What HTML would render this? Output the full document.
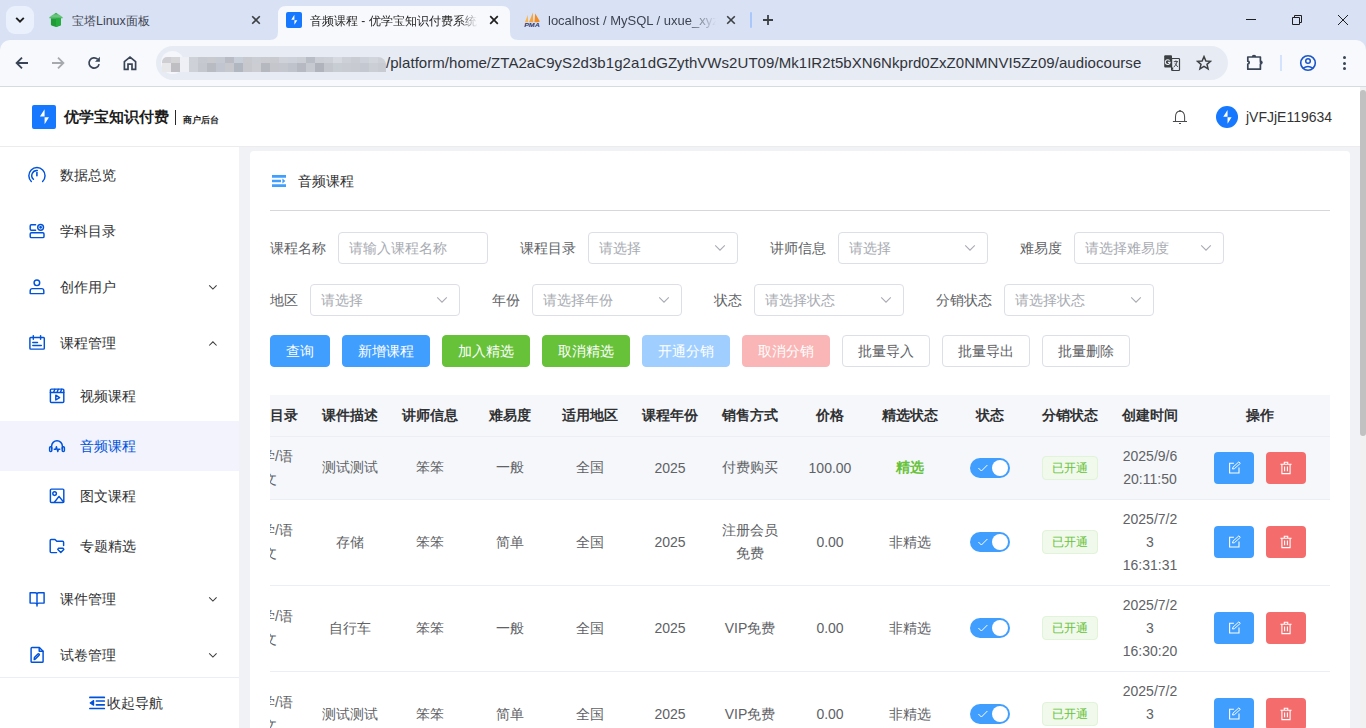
<!DOCTYPE html>
<html><head><meta charset="utf-8">
<style>
*{box-sizing:border-box;margin:0;padding:0}
html,body{width:1366px;height:728px;overflow:hidden;background:#fff;font-family:"Liberation Sans",sans-serif;}
.abs{position:absolute}
svg{display:block}
#blur i{position:absolute;width:9px;height:6px}
/* chrome */
#tabstrip{position:absolute;left:0;top:0;width:1366px;height:56px;background:#d9e2f5}
#toolbar{position:absolute;left:0;top:40px;width:1366px;height:46px;background:#f8f9fd;border-radius:10px 10px 0 0}
#tbborder{position:absolute;left:0;top:86px;width:1366px;height:1px;background:#d5dae3}
.tabtitle{position:absolute;top:14px;font-size:12px;line-height:14px;color:#1f1f1f;white-space:nowrap;overflow:hidden}
#omni{position:absolute;left:156px;top:46px;width:1072px;height:34px;border-radius:17px;background:#e7ebf3}
/* page */
#header{position:absolute;left:0;top:87px;width:1360px;height:60px;background:#fff;border-bottom:1px solid #ececec}
#sidebar{position:absolute;left:0;top:147px;width:239px;height:581px;background:#fff;overflow:hidden}
#main{position:absolute;left:239px;top:147px;width:1121px;height:581px;background:#f0f2f5;overflow:hidden}
#sbtrack{position:absolute;left:1360px;top:87px;width:6px;height:641px;background:#f1f1f1}
#sbthumb{position:absolute;left:1360px;top:90px;width:6px;height:346px;background:#c1c1c1;border-radius:3px}
.mi{position:absolute;left:0;width:239px;height:56px;font-size:14px;color:#303133}
.mi .t{position:absolute;left:60px;top:19px;line-height:18px}
.mi .ic{position:absolute;left:28px;top:19px}
.mi .arr{position:absolute;left:207px;top:25px}
.si{position:absolute;left:0;width:239px;height:50px;font-size:14px;color:#303133}
.si .t{position:absolute;left:80px;top:16px;line-height:18px}
.si .ic{position:absolute;left:49px;top:17px}
.si.act{background:#f2f3fd;color:#1660e8}
.btn{height:32px;border:1px solid;border-radius:4px;font-size:14px;line-height:30px;text-align:center;white-space:nowrap}
.th{font-size:14px;line-height:18px;font-weight:bold;color:#303133;text-align:center;white-space:nowrap}
.td{font-size:14px;line-height:23px;color:#606266;text-align:center;white-space:nowrap}
.tag{width:56px;height:24px;border:1px solid #e1f3d8;background:#f0f9eb;color:#67c23a;border-radius:4px;font-size:12px;line-height:22px;text-align:center}
#card{position:absolute;left:11px;top:4px;width:1100px;height:700px;background:#fff;border-radius:4px}
</style></head><body>


<!-- ===== Browser tab strip ===== -->
<div id="tabstrip"></div>
<!-- dropdown -->
<div class="abs" style="left:6px;top:6px;width:28px;height:28px;border-radius:9px;background:#eaf0fc"></div>
<svg class="abs" style="left:14px;top:14px" width="12" height="12" viewBox="0 0 12 12"><path d="M2.2 3.8 L6 7.6 L9.8 3.8" fill="none" stroke="#1f1f1f" stroke-width="1.9"/></svg>
<!-- tab1 -->
<svg class="abs" style="left:49px;top:12px" width="14" height="16" viewBox="0 0 14 16">
<path d="M7 0.8 L12.6 4.4 L13.6 5.6 L13.6 6.3 L0.4 6.3 L0.4 5.6 L1.4 4.4 Z" fill="#34ad4e"/>
<path d="M3.2 3.1 H10.8 M1 4.9 H13" stroke="#b5e2be" stroke-width="0.7"/>
<path d="M1.9 6.3 H12 V12.6 Q12 14 7 14.9 Q1.9 14 1.9 12.6 Z" fill="#1f9c36"/>
<path d="M7 6.3 H12 V12.6 Q12 14 7 14.9 Z" fill="#25ae3e"/>
</svg>
<div class="tabtitle" style="left:72px;width:90px;color:#3d4350">宝塔<span style="font-size:12.4px">Linux</span>面板</div>
<svg class="abs" style="left:251px;top:15px" width="10" height="10" viewBox="0 0 10 10"><path d="M1.2 1.2 L8.8 8.8 M8.8 1.2 L1.2 8.8" stroke="#3c4043" stroke-width="1.6"/></svg>
<!-- active tab -->
<svg class="abs" style="left:270px;top:6px" width="248" height="34" viewBox="0 0 248 34">
<path d="M0 34 Q8 34 8 26 L8 8 Q8 0 16 0 L232 0 Q240 0 240 8 L240 26 Q240 34 248 34 Z" fill="#f8f9fd"/>
</svg>
<div class="abs" style="left:286px;top:12px;width:16px;height:16px;border-radius:2px;background:#1677ff"></div>
<svg class="abs" style="left:286px;top:12px" width="16" height="16" viewBox="0 0 16 16"><path d="M8.40 2.87 L5.27 7.73 L8.40 7.73 Z M8.40 8.13 L11.33 8.13 L8.40 12.87 Z" fill="#fff"/></svg>
<div class="tabtitle" style="left:310px;width:168px;color:#1f1f1f;-webkit-mask-image:linear-gradient(90deg,#000 150px,transparent 168px)">音频课程 - 优学宝知识付费系统</div>
<svg class="abs" style="left:489px;top:15px" width="10" height="10" viewBox="0 0 10 10"><path d="M1.2 1.2 L8.8 8.8 M8.8 1.2 L1.2 8.8" stroke="#1f1f1f" stroke-width="1.7"/></svg>
<!-- tab3 -->
<svg class="abs" style="left:523px;top:12px" width="18" height="16" viewBox="0 0 18 16">
<path d="M1.9 10.3 L4.8 2.9 L5.2 10.3 Z" fill="#f9b552"/>
<path d="M6 10.3 L9.9 0.6 L10.3 10.3 Z" fill="#f7a43a"/>
<path d="M11.4 10.3 L12.2 1.6 L16.9 9.5 L15 10.3 Z" fill="#f28a1e"/>
<text x="1.2" y="14.8" font-family="Liberation Sans" font-weight="bold" font-style="italic" font-size="5.2" textLength="15.6" lengthAdjust="spacingAndGlyphs" fill="#2c3770">PMA</text>
</svg>
<div class="tabtitle" style="left:548px;width:170px;font-size:13px;color:#3d4350;-webkit-mask-image:linear-gradient(90deg,#000 140px,transparent 168px)">localhost / MySQL / uxue_xyz</div>
<svg class="abs" style="left:726px;top:15px" width="10" height="10" viewBox="0 0 10 10"><path d="M1.2 1.2 L8.8 8.8 M8.8 1.2 L1.2 8.8" stroke="#3c4043" stroke-width="1.6"/></svg>
<div class="abs" style="left:750px;top:12px;width:2px;height:16px;background:#a8c7fa;border-radius:1px"></div>
<svg class="abs" style="left:762px;top:14px" width="12" height="12" viewBox="0 0 12 12"><path d="M6 1 L6 11 M1 6 L11 6" stroke="#3c4043" stroke-width="1.8"/></svg>
<!-- window controls -->
<div class="abs" style="left:1246px;top:19px;width:10px;height:1px;background:#1f1f1f"></div>
<svg class="abs" style="left:1290px;top:13px" width="14" height="14" viewBox="0 0 14 14"><path d="M2.5 4.5 h7 v7 h-7 Z M4.5 4.5 V2.5 h7 v7 h-2" fill="none" stroke="#1f1f1f" stroke-width="1"/></svg>
<svg class="abs" style="left:1337px;top:14px" width="12" height="12" viewBox="0 0 12 12"><path d="M1 1 L11 11 M11 1 L1 11" stroke="#1f1f1f" stroke-width="1"/></svg>

<!-- ===== toolbar ===== -->
<div id="toolbar"></div>
<div id="tbborder"></div>
<svg class="abs" style="left:14px;top:55px" width="16" height="16" viewBox="0 0 16 16"><path d="M14 8 H3 M8 2.6 L2.6 8 L8 13.4" fill="none" stroke="#394456" stroke-width="1.8"/></svg>
<svg class="abs" style="left:50px;top:55px" width="16" height="16" viewBox="0 0 16 16"><path d="M2 8 H13 M8 2.6 L13.4 8 L8 13.4" fill="none" stroke="#a6a9ae" stroke-width="1.8"/></svg>
<svg class="abs" style="left:86px;top:55px" width="16" height="16" viewBox="0 0 16 16"><path d="M11.6 4.2 A5.1 5.1 0 1 0 13.1 9.1" fill="none" stroke="#394456" stroke-width="1.7"/><path d="M13.9 1.8 V6.7 H9 Z" fill="#394456"/></svg>
<svg class="abs" style="left:122px;top:55px" width="16" height="16" viewBox="0 0 16 16"><path d="M2.4 14.4 V6.6 L8 2 L13.6 6.6 V14.4 H10 V9.2 H6 V14.4 Z" fill="none" stroke="#394456" stroke-width="1.7" stroke-linejoin="miter"/></svg>
<div id="omni"></div>
<div class="abs" style="left:161px;top:51px;width:23px;height:23px;border-radius:12px;background:#f4f6fb"></div>
<div id="blur" class="abs" style="left:162px;top:57px;width:224px;height:15px;overflow:hidden;border-radius:5px 8px 0 0"><i style="left:0px;top:0;background:#cfcfd3"></i><i style="left:0px;top:6px;height:9px;background:#e8e8ea"></i><i style="left:9px;top:0;background:#d5d5d8"></i><i style="left:9px;top:6px;height:9px;background:#bfbfc3"></i><i style="left:18px;top:0;background:#eef0f6"></i><i style="left:18px;top:6px;height:9px;background:#eef0f6"></i><i style="left:27px;top:0;background:#ced1d8"></i><i style="left:27px;top:6px;height:9px;background:#ced1d8"></i><i style="left:36px;top:0;background:#c7c9d0"></i><i style="left:36px;top:6px;height:9px;background:#c5c7ce"></i><i style="left:45px;top:0;background:#c9cad0"></i><i style="left:45px;top:6px;height:9px;background:#b9bbc2"></i><i style="left:54px;top:0;background:#c5c9d2"></i><i style="left:54px;top:6px;height:9px;background:#c0c5cf"></i><i style="left:63px;top:0;background:#b9bcc4"></i><i style="left:63px;top:6px;height:9px;background:#c7c8ce"></i><i style="left:72px;top:0;background:#c8ced8"></i><i style="left:72px;top:6px;height:9px;background:#b1b7c1"></i><i style="left:81px;top:0;background:#c7c9cf"></i><i style="left:81px;top:6px;height:9px;background:#c7c8ce"></i><i style="left:90px;top:0;background:#cbcdd4"></i><i style="left:90px;top:6px;height:9px;background:#cbcdd3"></i><i style="left:99px;top:0;background:#c9cbd1"></i><i style="left:99px;top:6px;height:9px;background:#b5b8bf"></i><i style="left:108px;top:0;background:#c8cad0"></i><i style="left:108px;top:6px;height:9px;background:#c4c6cc"></i><i style="left:117px;top:0;background:#cfd2d9"></i><i style="left:117px;top:6px;height:9px;background:#c4c7ce"></i><i style="left:126px;top:0;background:#cdd2da"></i><i style="left:126px;top:6px;height:9px;background:#bfc4cc"></i><i style="left:135px;top:0;background:#cbced5"></i><i style="left:135px;top:6px;height:9px;background:#b6b9c1"></i><i style="left:144px;top:0;background:#b9bdc5"></i><i style="left:144px;top:6px;height:9px;background:#c6c9d0"></i><i style="left:153px;top:0;background:#cbced5"></i><i style="left:153px;top:6px;height:9px;background:#b0b3bb"></i><i style="left:162px;top:0;background:#cdd0d7"></i><i style="left:162px;top:6px;height:9px;background:#c3c6cc"></i><i style="left:171px;top:0;background:#d6d9e0"></i><i style="left:171px;top:6px;height:9px;background:#c8ccd3"></i><i style="left:180px;top:0;background:#cdd0d7"></i><i style="left:180px;top:6px;height:9px;background:#c8cbd2"></i><i style="left:189px;top:0;background:#c9ccd3"></i><i style="left:189px;top:6px;height:9px;background:#c7cad1"></i><i style="left:198px;top:0;background:#cdd1d9"></i><i style="left:198px;top:6px;height:9px;background:#c4c8d0"></i><i style="left:207px;top:0;background:#d2d5dc"></i><i style="left:207px;top:6px;height:9px;background:#cbced5"></i><i style="left:216px;top:0;background:#cdd0d6"></i><i style="left:216px;top:6px;height:9px;background:#c8cbd1"></i></div>
<div class="abs" style="left:386px;top:54px;font-size:15px;line-height:18px;color:#30333a;white-space:nowrap;letter-spacing:0.057px">/platform/home/ZTA2aC9yS2d3b1g2a1dGZythVWs2UT09/Mk1IR2t5bXN6Nkprd0ZxZ0NMNVI5Zz09/audiocourse</div>
<svg class="abs" style="left:1164px;top:55px" width="17" height="17" viewBox="0 0 17 17">
<rect x="0.2" y="0.2" width="7.8" height="12.4" rx="1" fill="#3c4043"/>
<rect x="7.6" y="3.5" width="7.9" height="12" rx="0.8" fill="#e7ebf3" stroke="#3c4043" stroke-width="1.2"/>
<path d="M7.2 12.4 H9.2 V16.2 Z" fill="#3c4043"/>
<path d="M5.6 5.6 A2.4 2.4 0 1 0 6.1 7.4 H3.9" fill="none" stroke="#e7ebf3" stroke-width="1.1"/>
<path d="M9.8 6.6 H14 M11.9 5.4 V6.6 M13.1 6.6 Q12.2 10 9.8 12.2 M11 8.4 L13.8 12" fill="none" stroke="#3c4043" stroke-width="0.9"/>
</svg>
<svg class="abs" style="left:1196px;top:55px" width="16" height="16" viewBox="0 0 16 16"><path d="M8 1.6 L9.9 6 L14.6 6.3 L11 9.3 L12.1 13.9 L8 11.4 L3.9 13.9 L5 9.3 L1.4 6.3 L6.1 6 Z" fill="none" stroke="#3c4043" stroke-width="1.5" stroke-linejoin="miter"/></svg>
<svg class="abs" style="left:1246px;top:53px" width="18" height="18" viewBox="0 0 18 18"><path d="M1.8 4 H6.6 A1.4 1.4 0 0 1 9.4 4 H14.4 V8.2 A1.4 1.4 0 0 1 14.4 11 V16.2 H1.8 V11 A1.4 1.4 0 0 0 1.8 8.2 Z" fill="none" stroke="#394456" stroke-width="1.7" stroke-linejoin="round"/><circle cx="8" cy="3.4" r="1.3" fill="#394456"/><circle cx="15" cy="9.6" r="1.3" fill="#394456"/></svg>
<div class="abs" style="left:1280px;top:55px;width:2px;height:16px;background:#d3e3fd"></div>
<svg class="abs" style="left:1299px;top:54px" width="18" height="18" viewBox="0 0 18 18"><circle cx="9" cy="9" r="7.3" fill="none" stroke="#1a56c9" stroke-width="1.6"/><circle cx="9" cy="7" r="2.3" fill="none" stroke="#1a56c9" stroke-width="1.5"/><path d="M4.2 14.2 Q9 10.6 13.8 14.2" fill="none" stroke="#1a56c9" stroke-width="1.5"/></svg>
<div class="abs" style="left:1342.5px;top:56px;width:3px;height:3px;border-radius:2px;background:#394456"></div>
<div class="abs" style="left:1342.5px;top:61.5px;width:3px;height:3px;border-radius:2px;background:#394456"></div>
<div class="abs" style="left:1342.5px;top:67px;width:3px;height:3px;border-radius:2px;background:#394456"></div>

<!-- ===== Page ===== -->
<div id="header">
<div class="abs" style="left:32px;top:18px;width:24px;height:24px;border-radius:2px;background:#1677ff"></div>
<svg class="abs" style="left:32px;top:18px" width="24" height="24" viewBox="0 0 24 24"><path d="M12.60 4.30 L7.90 11.60 L12.60 11.60 Z M12.60 12.20 L17.00 12.20 L12.60 19.30 Z" fill="#fff"/></svg>
<div class="abs" style="left:64px;top:21px;font-size:15px;line-height:18px;font-weight:bold;color:#1d1d1d;white-space:nowrap">优学宝知识付费</div>
<div class="abs" style="left:174.7px;top:22.5px;width:1.7px;height:15px;background:#2a2a2a"></div>
<div class="abs" style="left:183px;top:28px;font-size:9px;line-height:11px;font-weight:bold;color:#1d1d1d;white-space:nowrap">商户后台</div>
<svg class="abs" style="left:1172px;top:22px" width="16" height="16" viewBox="0 0 16 16"><path d="M3.5 12.4 V7.8 Q3.6 2.4 8 2 Q12.4 2.4 12.6 7.8 V12.4 M0.9 12.4 H15 M7 14.5 H9" fill="none" stroke="#4a4b4f" stroke-width="1.05"/><circle cx="8" cy="1.9" r="0.9" fill="#4a4b4f"/></svg>
<div class="abs" style="left:1216px;top:19px;width:22px;height:22px;border-radius:11px;background:#1677ff"></div>
<svg class="abs" style="left:1216px;top:19px" width="22" height="22" viewBox="0 0 22 22"><path d="M11.55 3.94 L7.24 10.63 L11.55 10.63 Z M11.55 11.18 L15.58 11.18 L11.55 17.69 Z" fill="#fff"/></svg>
<div class="abs" style="left:1246px;top:22px;font-size:14px;line-height:16px;color:#333;white-space:nowrap">jVFJjE119634</div>
</div>
<div id="sidebar">
<svg class="abs" style="left:24px;top:15px" width="26" height="26" viewBox="0 0 26 26" fill="none" stroke="#0052d9" stroke-width="1.45" stroke-linecap="round" stroke-linejoin="round"><path d="M7.3 19.5 A8.1 8.1 0 1 1 18.6 19.5"/><path d="M9.4 17.3 A5.1 5.1 0 0 1 13.3 8.5"/><path d="M12.9 10.6 V13.8" stroke-width="1.6"/></svg><div class="abs" style="left:60px;top:19px;font-size:14px;line-height:18px;color:#303133;white-space:nowrap">数据总览</div><svg class="abs" style="left:24px;top:71px" width="26" height="26" viewBox="0 0 26 26" fill="none" stroke="#0052d9" stroke-width="1.45" stroke-linecap="round" stroke-linejoin="round"><path d="M11.6 6.7 H7.4 Q6.2 6.7 6.2 7.9 V11 Q6.2 12.2 7.4 12.2 H11.6"/><circle cx="16.6" cy="9.3" r="2.9"/><circle cx="16.6" cy="9.3" r="0.7" fill="#0052d9"/><rect x="6.2" y="14.8" width="13.8" height="4.8" rx="1.2"/></svg><div class="abs" style="left:60px;top:75px;font-size:14px;line-height:18px;color:#303133;white-space:nowrap">学科目录</div><svg class="abs" style="left:24px;top:127px" width="26" height="26" viewBox="0 0 26 26" fill="none" stroke="#0052d9" stroke-width="1.45" stroke-linecap="round" stroke-linejoin="round"><circle cx="12.9" cy="8.8" r="2.8"/><path d="M6.2 19.6 V16.8 Q6.2 14.6 8.4 14.6 H17.6 Q19.8 14.6 19.8 16.8 V19.6 Z"/></svg><div class="abs" style="left:60px;top:131px;font-size:14px;line-height:18px;color:#303133;white-space:nowrap">创作用户</div><svg class="abs" style="left:207px;top:137px" width="12" height="8" viewBox="0 0 12 8"><path d="M2.2 1.3 L5.9 5 L9.6 1.3" fill="none" stroke="#3a3b3e" stroke-width="1.05"/></svg><svg class="abs" style="left:24px;top:183px" width="26" height="26" viewBox="0 0 26 26" fill="none" stroke="#0052d9" stroke-width="1.45" stroke-linecap="round" stroke-linejoin="round"><rect x="5.9" y="7.4" width="14.4" height="11.7" rx="0.8"/><path d="M9.3 5.6 V9.2 M16.6 5.6 V9.2 M8.8 12.5 H13.5 M8.8 15.5 H17.3"/></svg><div class="abs" style="left:60px;top:187px;font-size:14px;line-height:18px;color:#303133;white-space:nowrap">课程管理</div><svg class="abs" style="left:207px;top:192.5px" width="12" height="8" viewBox="0 0 12 8"><path d="M2.2 5.5 L5.9 1.8 L9.6 5.5" fill="none" stroke="#3a3b3e" stroke-width="1.05"/></svg><svg class="abs" style="left:24px;top:439px" width="26" height="26" viewBox="0 0 26 26" fill="none" stroke="#0052d9" stroke-width="1.45" stroke-linecap="round" stroke-linejoin="round"><path d="M13 7.6 Q12.4 6.7 11.2 6.7 H6.1 V17.1 H11.2 Q12.4 17.1 13 18 Q13.6 17.1 14.8 17.1 H20.1 V6.7 H14.8 Q13.6 6.7 13 7.6 Z"/><path d="M13 7.6 V20"/></svg><div class="abs" style="left:60px;top:443px;font-size:14px;line-height:18px;color:#303133;white-space:nowrap">课件管理</div><svg class="abs" style="left:207px;top:449px" width="12" height="8" viewBox="0 0 12 8"><path d="M2.2 1.3 L5.9 5 L9.6 1.3" fill="none" stroke="#3a3b3e" stroke-width="1.05"/></svg><svg class="abs" style="left:24px;top:495px" width="26" height="26" viewBox="0 0 26 26" fill="none" stroke="#0052d9" stroke-width="1.45" stroke-linecap="round" stroke-linejoin="round"><path d="M15.4 5.5 H8 Q7.1 5.5 7.1 6.4 V19.4 Q7.1 20.3 8 20.3 H18.2 Q19.1 20.3 19.1 19.4 V9.2 Z"/><path d="M15.2 5.6 V9.3 H19"/><path d="M10.2 17.6 L10.4 15.6 L13.9 12 Q14.5 11.4 15.1 12 Q15.7 12.6 15.1 13.2 L11.6 16.8 Z"/></svg><div class="abs" style="left:60px;top:499px;font-size:14px;line-height:18px;color:#303133;white-space:nowrap">试卷管理</div><svg class="abs" style="left:207px;top:505px" width="12" height="8" viewBox="0 0 12 8"><path d="M2.2 1.3 L5.9 5 L9.6 1.3" fill="none" stroke="#3a3b3e" stroke-width="1.05"/></svg><div class="abs" style="left:0;top:274px;width:239px;height:50px;background:#f2f3fd"></div><svg class="abs" style="left:44px;top:235px" width="26" height="26" viewBox="0 0 26 26" fill="none" stroke="#0052d9" stroke-width="1.45" stroke-linecap="round" stroke-linejoin="round"><rect x="6.4" y="7.1" width="13.4" height="13.4" rx="1"/><path d="M6.4 10.4 H19.8 M9.6 10.2 L10.9 7.3 M13 10.2 L14.3 7.3 M16.4 10.2 L17.7 7.3"/><path d="M11.8 13.2 V18 L15.6 15.6 Z"/></svg><div class="abs" style="left:80px;top:240px;font-size:14px;line-height:18px;color:#303133;white-space:nowrap">视频课程</div><svg class="abs" style="left:44px;top:285px" width="26" height="26" viewBox="0 0 26 26" fill="none" stroke="#0052d9" stroke-width="1.45" stroke-linecap="round" stroke-linejoin="round"><path d="M7.6 16.4 V14.2 A5.4 5.4 0 0 1 18.4 14.2 V16.4"/><rect x="5.6" y="14.8" width="2.2" height="4.8" rx="1"/><rect x="18.2" y="14.8" width="2.2" height="4.8" rx="1"/><path d="M10.2 17.2 H11.8 L12.4 14.6 L13.8 19.6 L14.4 17.2 H15.8" stroke-width="1.4"/></svg><div class="abs" style="left:80px;top:290px;font-size:14px;line-height:18px;color:#0052d9;white-space:nowrap">音频课程</div><svg class="abs" style="left:44px;top:335px" width="26" height="26" viewBox="0 0 26 26" fill="none" stroke="#0052d9" stroke-width="1.45" stroke-linecap="round" stroke-linejoin="round"><rect x="6.4" y="7.1" width="13.4" height="13.4" rx="1"/><circle cx="10.6" cy="11.6" r="1.8"/><path d="M10.4 20.3 L15 14.4 L19.6 20"/></svg><div class="abs" style="left:80px;top:340px;font-size:14px;line-height:18px;color:#303133;white-space:nowrap">图文课程</div><svg class="abs" style="left:44px;top:385px" width="26" height="26" viewBox="0 0 26 26" fill="none" stroke="#0052d9" stroke-width="1.45" stroke-linecap="round" stroke-linejoin="round"><path d="M12.6 20.6 H7.2 Q6.2 20.6 6.2 19.6 V8.4 Q6.2 7.4 7.2 7.4 H11 L12.8 9.3 H18.6 Q19.6 9.3 19.6 10.3 V13.6"/><path d="M14.6 16.2 H19 L19.8 17.4 L16.8 20.4 L13.8 17.4 Z"/></svg><div class="abs" style="left:80px;top:390px;font-size:14px;line-height:18px;color:#303133;white-space:nowrap">专题精选</div><div class="abs" style="left:0;top:530px;width:239px;height:51px;background:#fff;border-top:1px solid #ebeef5"></div><svg class="abs" style="left:84px;top:543px" width="26" height="26" viewBox="0 0 26 26" fill="none" stroke="#0052d9" stroke-width="1.45" stroke-linecap="round" stroke-linejoin="round"><path d="M5.9 7.4 H20.3 M5.9 18.5 H20.3 M12.4 11 H20.3 M12.4 14.8 H20.3" stroke-width="1.7"/><path d="M9.6 10.6 V15.2 L6.2 12.9 Z" fill="#0052d9" stroke-width="1.2"/></svg><div class="abs" style="left:107px;top:547px;font-size:14px;line-height:18px;color:#303133;white-space:nowrap">收起导航</div></div>
<div id="main"><div id="card">
<svg class="abs" style="left:22px;top:24px" width="14" height="12" viewBox="0 0 14 12"><path d="M0 0 H14 V2.8 H0Z M0 9.3 H14 V12 H0Z M0 4.8 H9 V7.2 H0Z" fill="#409eff"/><path d="M10.4 3.6 L13.4 6 L10.4 8.4Z" fill="#409eff"/></svg>
<div class="abs" style="left:48px;top:21px;font-size:14px;line-height:18px;color:#303133">音频课程</div>
<div class="abs" style="left:20px;top:59px;width:1060px;height:1px;background:#d6d7da"></div>
<div class="abs" style="left:20px;top:88px;font-size:14px;line-height:18px;color:#606266;white-space:nowrap">课程名称</div><div class="abs" style="left:88px;top:81px;width:150px;height:32px;border:1px solid #dcdfe6;border-radius:4px;background:#fff"></div><div class="abs" style="left:99px;top:88px;font-size:14px;line-height:18px;color:#a8abb2;white-space:nowrap">请输入课程名称</div>
<div class="abs" style="left:270px;top:88px;font-size:14px;line-height:18px;color:#606266;white-space:nowrap">课程目录</div><div class="abs" style="left:338px;top:81px;width:150px;height:32px;border:1px solid #dcdfe6;border-radius:4px;background:#fff"></div><div class="abs" style="left:349px;top:88px;font-size:14px;line-height:18px;color:#a8abb2;white-space:nowrap">请选择</div><svg class="abs" style="left:464px;top:93px" width="12" height="8" viewBox="0 0 12 8"><path d="M1.2 1.4 L6 6.2 L10.8 1.4" fill="none" stroke="#a8abb2" stroke-width="1.1"/></svg>
<div class="abs" style="left:520px;top:88px;font-size:14px;line-height:18px;color:#606266;white-space:nowrap">讲师信息</div><div class="abs" style="left:588px;top:81px;width:150px;height:32px;border:1px solid #dcdfe6;border-radius:4px;background:#fff"></div><div class="abs" style="left:599px;top:88px;font-size:14px;line-height:18px;color:#a8abb2;white-space:nowrap">请选择</div><svg class="abs" style="left:714px;top:93px" width="12" height="8" viewBox="0 0 12 8"><path d="M1.2 1.4 L6 6.2 L10.8 1.4" fill="none" stroke="#a8abb2" stroke-width="1.1"/></svg>
<div class="abs" style="left:770px;top:88px;font-size:14px;line-height:18px;color:#606266;white-space:nowrap">难易度</div><div class="abs" style="left:824px;top:81px;width:150px;height:32px;border:1px solid #dcdfe6;border-radius:4px;background:#fff"></div><div class="abs" style="left:835px;top:88px;font-size:14px;line-height:18px;color:#a8abb2;white-space:nowrap">请选择难易度</div><svg class="abs" style="left:950px;top:93px" width="12" height="8" viewBox="0 0 12 8"><path d="M1.2 1.4 L6 6.2 L10.8 1.4" fill="none" stroke="#a8abb2" stroke-width="1.1"/></svg>
<div class="abs" style="left:20px;top:140px;font-size:14px;line-height:18px;color:#606266;white-space:nowrap">地区</div><div class="abs" style="left:60px;top:133px;width:150px;height:32px;border:1px solid #dcdfe6;border-radius:4px;background:#fff"></div><div class="abs" style="left:71px;top:140px;font-size:14px;line-height:18px;color:#a8abb2;white-space:nowrap">请选择</div><svg class="abs" style="left:186px;top:145px" width="12" height="8" viewBox="0 0 12 8"><path d="M1.2 1.4 L6 6.2 L10.8 1.4" fill="none" stroke="#a8abb2" stroke-width="1.1"/></svg>
<div class="abs" style="left:242px;top:140px;font-size:14px;line-height:18px;color:#606266;white-space:nowrap">年份</div><div class="abs" style="left:282px;top:133px;width:150px;height:32px;border:1px solid #dcdfe6;border-radius:4px;background:#fff"></div><div class="abs" style="left:293px;top:140px;font-size:14px;line-height:18px;color:#a8abb2;white-space:nowrap">请选择年份</div><svg class="abs" style="left:408px;top:145px" width="12" height="8" viewBox="0 0 12 8"><path d="M1.2 1.4 L6 6.2 L10.8 1.4" fill="none" stroke="#a8abb2" stroke-width="1.1"/></svg>
<div class="abs" style="left:464px;top:140px;font-size:14px;line-height:18px;color:#606266;white-space:nowrap">状态</div><div class="abs" style="left:504px;top:133px;width:150px;height:32px;border:1px solid #dcdfe6;border-radius:4px;background:#fff"></div><div class="abs" style="left:515px;top:140px;font-size:14px;line-height:18px;color:#a8abb2;white-space:nowrap">请选择状态</div><svg class="abs" style="left:630px;top:145px" width="12" height="8" viewBox="0 0 12 8"><path d="M1.2 1.4 L6 6.2 L10.8 1.4" fill="none" stroke="#a8abb2" stroke-width="1.1"/></svg>
<div class="abs" style="left:686px;top:140px;font-size:14px;line-height:18px;color:#606266;white-space:nowrap">分销状态</div><div class="abs" style="left:754px;top:133px;width:150px;height:32px;border:1px solid #dcdfe6;border-radius:4px;background:#fff"></div><div class="abs" style="left:765px;top:140px;font-size:14px;line-height:18px;color:#a8abb2;white-space:nowrap">请选择状态</div><svg class="abs" style="left:880px;top:145px" width="12" height="8" viewBox="0 0 12 8"><path d="M1.2 1.4 L6 6.2 L10.8 1.4" fill="none" stroke="#a8abb2" stroke-width="1.1"/></svg>
<div class="abs btn" style="left:20px;top:184px;width:60px;background:#409eff;border-color:#409eff;color:#fff">查询</div>
<div class="abs btn" style="left:92px;top:184px;width:88px;background:#409eff;border-color:#409eff;color:#fff">新增课程</div>
<div class="abs btn" style="left:192px;top:184px;width:88px;background:#67c23a;border-color:#67c23a;color:#fff">加入精选</div>
<div class="abs btn" style="left:292px;top:184px;width:88px;background:#67c23a;border-color:#67c23a;color:#fff">取消精选</div>
<div class="abs btn" style="left:392px;top:184px;width:88px;background:#a0cfff;border-color:#a0cfff;color:#fff">开通分销</div>
<div class="abs btn" style="left:492px;top:184px;width:88px;background:#fab6b6;border-color:#fab6b6;color:#fff">取消分销</div>
<div class="abs btn" style="left:592px;top:184px;width:88px;background:#fff;border-color:#dcdfe6;color:#606266">批量导入</div>
<div class="abs btn" style="left:692px;top:184px;width:88px;background:#fff;border-color:#dcdfe6;color:#606266">批量导出</div>
<div class="abs btn" style="left:792px;top:184px;width:88px;background:#fff;border-color:#dcdfe6;color:#606266">批量删除</div>
<div id="tbl" class="abs" style="left:20px;top:244px;width:1060px;height:400px;overflow:hidden">
<div class="abs" style="left:0;top:0;width:1060px;height:42px;background:#f5f7fa;border-bottom:1px solid #ebeef5"></div><div class="abs th" style="left:-40px;top:10.5px;width:80px">课程目录</div><div class="abs th" style="left:40px;top:10.5px;width:80px">课件描述</div><div class="abs th" style="left:120px;top:10.5px;width:80px">讲师信息</div><div class="abs th" style="left:200px;top:10.5px;width:80px">难易度</div><div class="abs th" style="left:280px;top:10.5px;width:80px">适用地区</div><div class="abs th" style="left:360px;top:10.5px;width:80px">课程年份</div><div class="abs th" style="left:440px;top:10.5px;width:80px">销售方式</div><div class="abs th" style="left:520px;top:10.5px;width:80px">价格</div><div class="abs th" style="left:600px;top:10.5px;width:80px">精选状态</div><div class="abs th" style="left:680px;top:10.5px;width:80px">状态</div><div class="abs th" style="left:760px;top:10.5px;width:80px">分销状态</div><div class="abs th" style="left:840px;top:10.5px;width:80px">创建时间</div><div class="abs th" style="left:920px;top:10.5px;width:140px">操作</div>
<div class="abs" style="left:0;top:42px;width:1060px;height:63px;background:#f5f7fa;border-bottom:1px solid #ebeef5"></div><div class="abs td" style="left:-40px;top:50.0px;width:80px">数学/语<br>文</div><div class="abs td" style="left:40px;top:60.5px;width:80px">测试测试</div><div class="abs td" style="left:120px;top:60.5px;width:80px">笨笨</div><div class="abs td" style="left:200px;top:60.5px;width:80px">一般</div><div class="abs td" style="left:280px;top:60.5px;width:80px">全国</div><div class="abs td" style="left:360px;top:61.5px;width:80px">2025</div><div class="abs td" style="left:440px;top:60.5px;width:80px">付费购买</div><div class="abs td" style="left:520px;top:61.5px;width:80px">100.00</div><div class="abs td" style="left:600px;top:60.5px;width:80px"><b style="color:#67c23a">精选</b></div><div class="abs td" style="left:840px;top:50.0px;width:80px">2025/9/6<br>20:11:50</div><div class="abs" style="left:700px;top:63px;width:40px;height:20px;border-radius:10px;background:#409eff"></div><div class="abs" style="left:722px;top:65px;width:16px;height:16px;border-radius:8px;background:#fff"></div><svg class="abs" style="left:707px;top:68px" width="12" height="10" viewBox="0 0 12 10"><path d="M1.4 5 L4.4 8 L10.4 2" fill="none" stroke="#fff" stroke-width="1"/></svg><div class="abs tag" style="left:772px;top:61px">已开通</div><div class="abs" style="left:944px;top:57px;width:40px;height:32px;border-radius:4px;background:#409eff"></div><svg class="abs" style="left:957px;top:65px" width="14" height="14" viewBox="0 0 14 14"><path d="M6.9 3.3 H2.6 V13 H12 V7.6" fill="none" stroke="#fff" stroke-width="1.1"/><path d="M5.50 9.00 L7.39 8.71 L13.30 3.38 L11.90 1.82 L5.99 7.15 Z" fill="none" stroke="#fff" stroke-width="0.95" stroke-linejoin="round"/></svg><div class="abs" style="left:996px;top:57px;width:40px;height:32px;border-radius:4px;background:#f56c6c"></div><svg class="abs" style="left:1009px;top:66px" width="14" height="14" viewBox="0 0 14 14"><path d="M1.4 3.2 H12.6 M5.3 3.2 V1.3 H8.7 V3.2 M2.9 3.2 V12.6 H11.1 V3.2 M5.6 5.4 V10.2 M8.4 5.4 V10.2" fill="none" stroke="#fff" stroke-width="1.1"/></svg>
<div class="abs" style="left:0;top:105px;width:1060px;height:86px;background:#fff;border-bottom:1px solid #ebeef5"></div><div class="abs td" style="left:-40px;top:124.0px;width:80px">数学/语<br>文</div><div class="abs td" style="left:40px;top:135.5px;width:80px">存储</div><div class="abs td" style="left:120px;top:135.5px;width:80px">笨笨</div><div class="abs td" style="left:200px;top:135.5px;width:80px">简单</div><div class="abs td" style="left:280px;top:135.5px;width:80px">全国</div><div class="abs td" style="left:360px;top:135.5px;width:80px">2025</div><div class="abs td" style="left:440px;top:124.0px;width:80px">注册会员<br>免费</div><div class="abs td" style="left:520px;top:135.5px;width:80px">0.00</div><div class="abs td" style="left:600px;top:135.5px;width:80px">非精选</div><div class="abs td" style="left:840px;top:112.5px;width:80px">2025/7/2<br>3<br>16:31:31</div><div class="abs" style="left:700px;top:137px;width:40px;height:20px;border-radius:10px;background:#409eff"></div><div class="abs" style="left:722px;top:139px;width:16px;height:16px;border-radius:8px;background:#fff"></div><svg class="abs" style="left:707px;top:142px" width="12" height="10" viewBox="0 0 12 10"><path d="M1.4 5 L4.4 8 L10.4 2" fill="none" stroke="#fff" stroke-width="1"/></svg><div class="abs tag" style="left:772px;top:135px">已开通</div><div class="abs" style="left:944px;top:131px;width:40px;height:32px;border-radius:4px;background:#409eff"></div><svg class="abs" style="left:957px;top:139px" width="14" height="14" viewBox="0 0 14 14"><path d="M6.9 3.3 H2.6 V13 H12 V7.6" fill="none" stroke="#fff" stroke-width="1.1"/><path d="M5.50 9.00 L7.39 8.71 L13.30 3.38 L11.90 1.82 L5.99 7.15 Z" fill="none" stroke="#fff" stroke-width="0.95" stroke-linejoin="round"/></svg><div class="abs" style="left:996px;top:131px;width:40px;height:32px;border-radius:4px;background:#f56c6c"></div><svg class="abs" style="left:1009px;top:140px" width="14" height="14" viewBox="0 0 14 14"><path d="M1.4 3.2 H12.6 M5.3 3.2 V1.3 H8.7 V3.2 M2.9 3.2 V12.6 H11.1 V3.2 M5.6 5.4 V10.2 M8.4 5.4 V10.2" fill="none" stroke="#fff" stroke-width="1.1"/></svg>
<div class="abs" style="left:0;top:191px;width:1060px;height:86px;background:#fff;border-bottom:1px solid #ebeef5"></div><div class="abs td" style="left:-40px;top:210.0px;width:80px">数学/语<br>文</div><div class="abs td" style="left:40px;top:221.5px;width:80px">自行车</div><div class="abs td" style="left:120px;top:221.5px;width:80px">笨笨</div><div class="abs td" style="left:200px;top:221.5px;width:80px">一般</div><div class="abs td" style="left:280px;top:221.5px;width:80px">全国</div><div class="abs td" style="left:360px;top:221.5px;width:80px">2025</div><div class="abs td" style="left:440px;top:221.5px;width:80px">VIP免费</div><div class="abs td" style="left:520px;top:221.5px;width:80px">0.00</div><div class="abs td" style="left:600px;top:221.5px;width:80px">非精选</div><div class="abs td" style="left:840px;top:198.5px;width:80px">2025/7/2<br>3<br>16:30:20</div><div class="abs" style="left:700px;top:223px;width:40px;height:20px;border-radius:10px;background:#409eff"></div><div class="abs" style="left:722px;top:225px;width:16px;height:16px;border-radius:8px;background:#fff"></div><svg class="abs" style="left:707px;top:228px" width="12" height="10" viewBox="0 0 12 10"><path d="M1.4 5 L4.4 8 L10.4 2" fill="none" stroke="#fff" stroke-width="1"/></svg><div class="abs tag" style="left:772px;top:221px">已开通</div><div class="abs" style="left:944px;top:217px;width:40px;height:32px;border-radius:4px;background:#409eff"></div><svg class="abs" style="left:957px;top:225px" width="14" height="14" viewBox="0 0 14 14"><path d="M6.9 3.3 H2.6 V13 H12 V7.6" fill="none" stroke="#fff" stroke-width="1.1"/><path d="M5.50 9.00 L7.39 8.71 L13.30 3.38 L11.90 1.82 L5.99 7.15 Z" fill="none" stroke="#fff" stroke-width="0.95" stroke-linejoin="round"/></svg><div class="abs" style="left:996px;top:217px;width:40px;height:32px;border-radius:4px;background:#f56c6c"></div><svg class="abs" style="left:1009px;top:226px" width="14" height="14" viewBox="0 0 14 14"><path d="M1.4 3.2 H12.6 M5.3 3.2 V1.3 H8.7 V3.2 M2.9 3.2 V12.6 H11.1 V3.2 M5.6 5.4 V10.2 M8.4 5.4 V10.2" fill="none" stroke="#fff" stroke-width="1.1"/></svg>
<div class="abs" style="left:0;top:277px;width:1060px;height:86px;background:#fff;border-bottom:1px solid #ebeef5"></div><div class="abs td" style="left:-40px;top:296.0px;width:80px">数学/语<br>文</div><div class="abs td" style="left:40px;top:307.5px;width:80px">测试测试</div><div class="abs td" style="left:120px;top:307.5px;width:80px">笨笨</div><div class="abs td" style="left:200px;top:307.5px;width:80px">简单</div><div class="abs td" style="left:280px;top:307.5px;width:80px">全国</div><div class="abs td" style="left:360px;top:307.5px;width:80px">2025</div><div class="abs td" style="left:440px;top:307.5px;width:80px">VIP免费</div><div class="abs td" style="left:520px;top:307.5px;width:80px">0.00</div><div class="abs td" style="left:600px;top:307.5px;width:80px">非精选</div><div class="abs td" style="left:840px;top:284.5px;width:80px">2025/7/2<br>3<br>16:29:10</div><div class="abs" style="left:700px;top:309px;width:40px;height:20px;border-radius:10px;background:#409eff"></div><div class="abs" style="left:722px;top:311px;width:16px;height:16px;border-radius:8px;background:#fff"></div><svg class="abs" style="left:707px;top:314px" width="12" height="10" viewBox="0 0 12 10"><path d="M1.4 5 L4.4 8 L10.4 2" fill="none" stroke="#fff" stroke-width="1"/></svg><div class="abs tag" style="left:772px;top:307px">已开通</div><div class="abs" style="left:944px;top:303px;width:40px;height:32px;border-radius:4px;background:#409eff"></div><svg class="abs" style="left:957px;top:311px" width="14" height="14" viewBox="0 0 14 14"><path d="M6.9 3.3 H2.6 V13 H12 V7.6" fill="none" stroke="#fff" stroke-width="1.1"/><path d="M5.50 9.00 L7.39 8.71 L13.30 3.38 L11.90 1.82 L5.99 7.15 Z" fill="none" stroke="#fff" stroke-width="0.95" stroke-linejoin="round"/></svg><div class="abs" style="left:996px;top:303px;width:40px;height:32px;border-radius:4px;background:#f56c6c"></div><svg class="abs" style="left:1009px;top:312px" width="14" height="14" viewBox="0 0 14 14"><path d="M1.4 3.2 H12.6 M5.3 3.2 V1.3 H8.7 V3.2 M2.9 3.2 V12.6 H11.1 V3.2 M5.6 5.4 V10.2 M8.4 5.4 V10.2" fill="none" stroke="#fff" stroke-width="1.1"/></svg>
</div>
</div></div>
<div id="sbtrack"></div>
<div id="sbthumb"></div>

</body></html>
